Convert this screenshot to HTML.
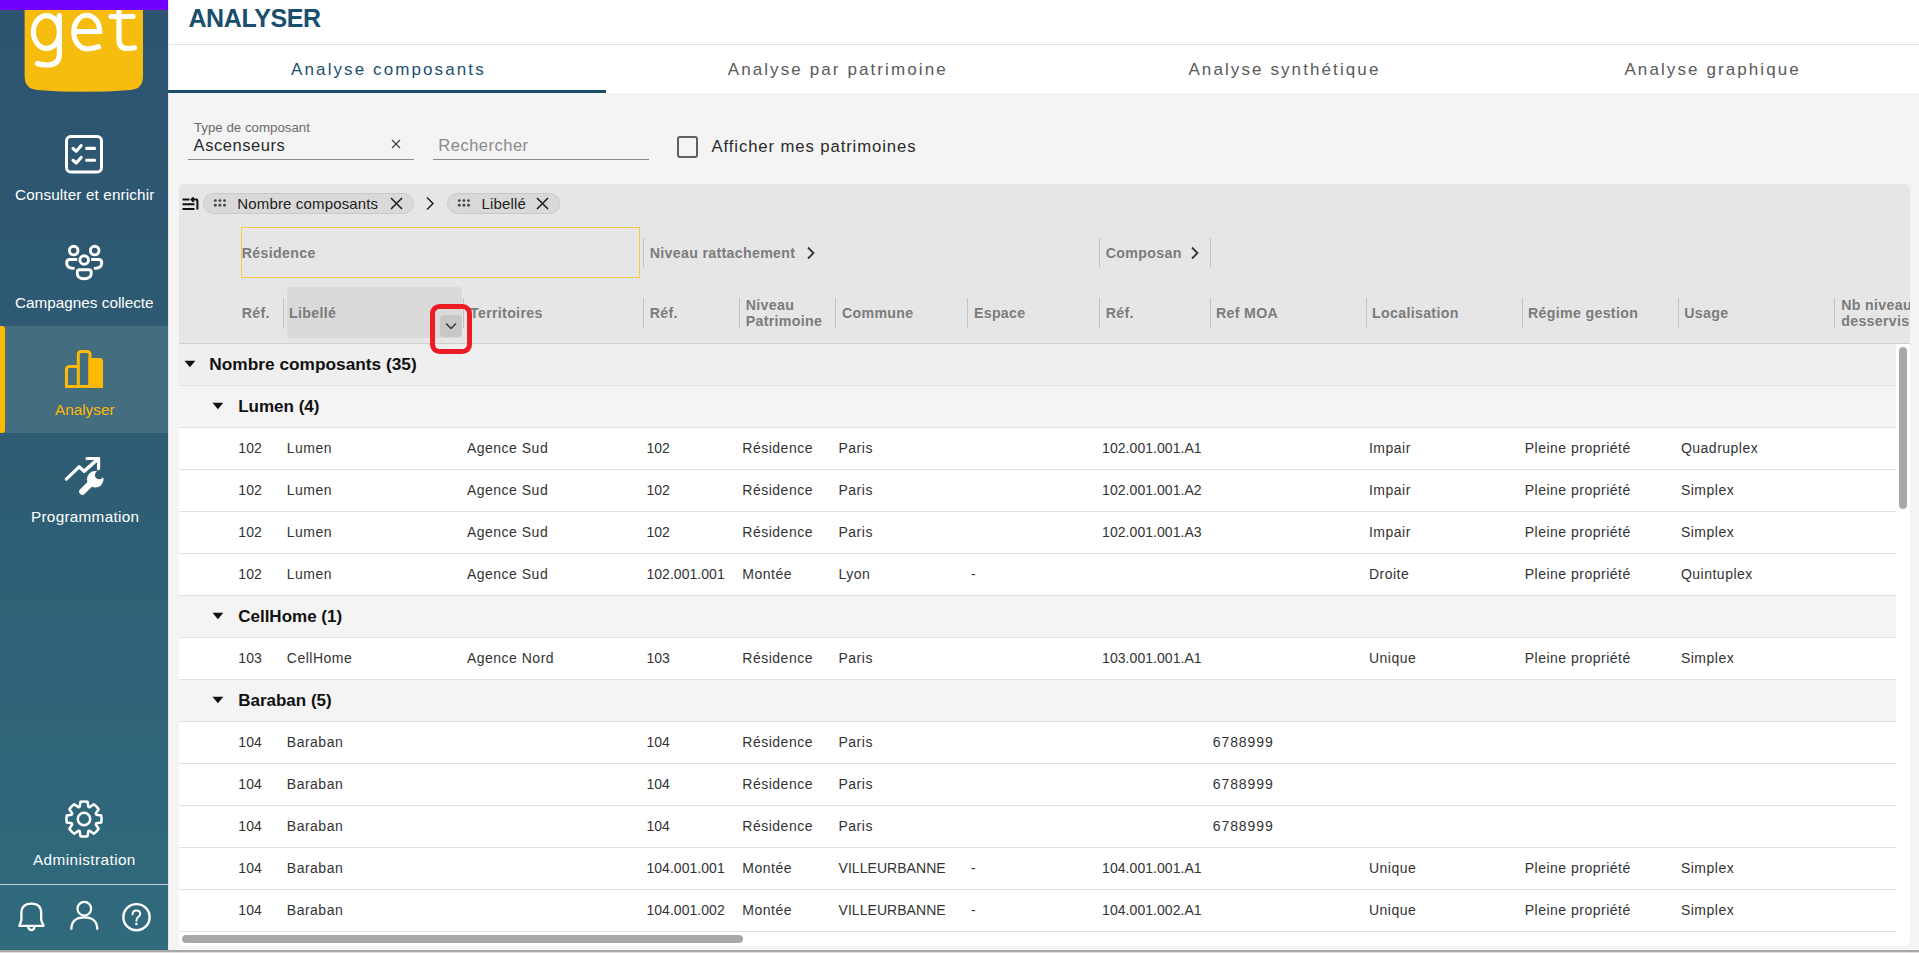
<!DOCTYPE html>
<html><head><meta charset="utf-8"><style>
html,body{margin:0;padding:0;}
body{width:1919px;height:953px;overflow:hidden;position:relative;background:#f4f4f4;font-family:"Liberation Sans", sans-serif;}
.r{position:absolute;box-sizing:border-box;}
svg.r{overflow:visible;}
.t{position:absolute;white-space:nowrap;}
</style></head><body>
<div class="r" style="left:168px;top:0px;width:1751px;height:44px;background:#fff"></div>
<div class="r" style="left:168px;top:44px;width:1751px;height:1px;background:#e3e3e3"></div>
<div class="r" style="left:168px;top:45px;width:1751px;height:48px;background:#fff"></div>
<div class="r" style="left:168px;top:93px;width:1751px;height:857px;background:#f4f4f4"></div>
<div class="r" style="left:168px;top:0px;width:1px;height:950px;background:#e6e6e6"></div>
<div class="r" style="left:0px;top:950px;width:1919px;height:2px;background:#aca7a7"></div>
<div class="r" style="left:0px;top:952px;width:1919px;height:1px;background:#e3dcdc"></div>
<div class="r" style="left:0px;top:0px;width:168px;height:950px;background:linear-gradient(to bottom,#2d5370 0%,#2e5d74 50%,#306a7d 100%)"></div>
<svg class="r" style="left:0;top:0" width="168" height="100" viewBox="0 0 168 100"><path d="M24.6 8V76Q24.6 89.3 37.5 89.9Q84 93.6 130.5 89.9Q143 89.3 143 76V8Z" fill="#f6bd0e"/></svg>
<svg class="r" style="left:0;top:0" width="168" height="100" viewBox="0 0 168 100" fill="none" stroke="#fff" stroke-width="5.2" stroke-linecap="round">
<ellipse cx="46.5" cy="32" rx="13" ry="16.4"/><path d="M59.4 15.6V54Q59.4 65 47 65Q41 65 37.5 63.5"/>
<path d="M73.8 31.5H99.8A13 16.6 0 0 0 73.8 32.2A13 16.6 0 0 0 86.8 48.8Q93 48.8 98.5 46.8"/>
<path d="M119 4V40Q119 48.5 127.5 48.5Q131 48.5 134.5 47.8"/><path d="M111 16.5H133"/></svg>
<div class="r" style="left:0px;top:0px;width:168px;height:10px;background:#7300ff"></div>
<div class="r" style="left:0px;top:326px;width:168px;height:107px;background:#446d80"></div>
<div class="r" style="left:0px;top:326px;width:5px;height:107px;background:#ffb900;border-radius:0 3px 3px 0"></div>
<div class="t" style="left:15.0px;top:186.75px;font-size:15.3px;line-height:15.3px;font-weight:400;color:#ffffff;letter-spacing:0.12px;">Consulter et enrichir</div>
<div class="t" style="left:15.0px;top:295.25px;font-size:15.3px;line-height:15.3px;font-weight:400;color:#ffffff;letter-spacing:0px;">Campagnes collecte</div>
<div class="t" style="left:55.0px;top:401.75px;font-size:15.3px;line-height:15.3px;font-weight:400;color:#ffb900;letter-spacing:0px;">Analyser</div>
<div class="t" style="left:31.0px;top:508.65px;font-size:15.3px;line-height:15.3px;font-weight:400;color:#ffffff;letter-spacing:0.28px;">Programmation</div>
<div class="t" style="left:33.0px;top:852.05px;font-size:15.3px;line-height:15.3px;font-weight:400;color:#ffffff;letter-spacing:0.42px;">Administration</div>
<div class="r" style="left:0px;top:884px;width:168px;height:1px;background:#c9d5da"></div>
<svg class="r" style="left:64px;top:134px" width="40" height="40" viewBox="0 0 40 40" fill="none" stroke="#fff" stroke-width="3" stroke-linecap="round" stroke-linejoin="round">
<rect x="2.5" y="2.6" width="35" height="35.4" rx="4.2"/>
<path d="M9 14.5l3.3 2.7 4.9-5.6M9 26.3l3.3 2.7 4.9-5.6" stroke-width="3.1"/><path d="M22.6 14.4h8M22.6 26.2h8" stroke-width="3.1"/></svg>
<svg class="r" style="left:64px;top:244px" width="40" height="40" viewBox="0 0 40 40" fill="none" stroke="#fff" stroke-width="2.9">
<circle cx="9.7" cy="6.6" r="4.3"/><circle cx="30.7" cy="6.6" r="4.3"/><circle cx="20.2" cy="16" r="4.3"/>
<path d="M13.2 15.5H5.9Q2.7 15.5 2.7 18.7V19.5Q2.7 24.4 10.6 24.4"/><path d="M27.2 15.5H34.5Q37.7 15.5 37.7 18.7V19.5Q37.7 24.4 29.8 24.4"/>
<path d="M15.6 25.7H24.9Q27.2 25.7 27.2 28V29.5Q27.2 34.7 20.2 34.7Q13.3 34.7 13.3 29.5V28Q13.3 25.7 15.6 25.7Z"/></svg>
<svg class="r" style="left:64px;top:349px" width="40" height="40" viewBox="0 0 40 40" fill="none" stroke="#ffb900" stroke-width="3">
<path d="M2.5 39V20.4Q2.5 17.4 5.5 17.4H14.3"/><path d="M14.3 37.5V5.5Q14.3 2.5 17.3 2.5H23Q26 2.5 26 5.5V37.5"/>
<path d="M24.5 9.1H36Q39 9.1 39 12.1V39H24.5Z" fill="#ffb900" stroke="none"/><path d="M1 37.5H39"/></svg>
<svg class="r" style="left:64px;top:456px" width="40" height="40" viewBox="0 0 40 40" fill="none" stroke="#fff" stroke-width="3.2" stroke-linecap="round" stroke-linejoin="round">
<path d="M2.3 23.1L15.1 10.8L20.1 15.2L34.4 2.6"/><path d="M23 2.5H34.6V12.9"/>
<circle cx="31.2" cy="23.3" r="8.3" fill="#fff" stroke="none"/><path d="M18.5 35.5L29 25" stroke-width="6.6"/>
<circle cx="35.2" cy="19" r="4.3" fill="#2e5d74" stroke="none"/><path d="M35.2 19L42 12.2" stroke="#2e5d74" stroke-width="7" stroke-linecap="butt"/>
<path d="M20.1 15.2L34.4 2.6" /></svg>
<svg class="r" style="left:60px;top:795px" width="48" height="48" viewBox="0 0 48 48" fill="none" stroke="#fff" stroke-width="2.5" stroke-linejoin="round">
<circle cx="24" cy="24" r="6.2"/><path d="M19.66 11.75L20.49 6.75A17.6 17.6 0 0 1 27.51 6.75L28.34 11.75A13.0 13.0 0 0 1 29.60 12.27L33.71 9.32A17.6 17.6 0 0 1 38.68 14.29L35.73 18.40A13.0 13.0 0 0 1 36.25 19.66L41.25 20.49A17.6 17.6 0 0 1 41.25 27.51L36.25 28.34A13.0 13.0 0 0 1 35.73 29.60L38.68 33.71A17.6 17.6 0 0 1 33.71 38.68L29.60 35.73A13.0 13.0 0 0 1 28.34 36.25L27.51 41.25A17.6 17.6 0 0 1 20.49 41.25L19.66 36.25A13.0 13.0 0 0 1 18.40 35.73L14.29 38.68A17.6 17.6 0 0 1 9.32 33.71L12.27 29.60A13.0 13.0 0 0 1 11.75 28.34L6.75 27.51A17.6 17.6 0 0 1 6.75 20.49L11.75 19.66A13.0 13.0 0 0 1 12.27 18.40L9.32 14.29A17.6 17.6 0 0 1 14.29 9.32L18.40 12.27Z"/></svg>
<svg class="r" style="left:17px;top:902px" width="30" height="30" viewBox="0 0 30 30" fill="none" stroke="#fff" stroke-width="2.3" stroke-linejoin="round">
<path d="M2.4 23.8H26.6L24.2 18.2V11.2Q24.2 1.6 14.4 1.6Q4.4 1.6 4.4 11.2V18.2Z"/><path d="M11.4 25A3 3 0 0 0 17.4 25"/></svg>
<svg class="r" style="left:69px;top:900px" width="30" height="31" viewBox="0 0 30 31" fill="none" stroke="#fff" stroke-width="2.2">
<circle cx="15.3" cy="8.7" r="6.8"/><path d="M2.3 29.7Q2.3 17.3 15.3 17.3Q28.3 17.3 28.3 29.7"/></svg>
<svg class="r" style="left:121px;top:902px" width="31" height="31" viewBox="0 0 31 31" fill="none" stroke="#fff" stroke-width="2.4">
<circle cx="15.5" cy="15.2" r="13.1"/><path d="M11.6 12.2Q11.6 8.4 15.4 8.4Q19.2 8.4 19.2 11.8Q19.2 13.6 17.2 15Q15.4 16.3 15.4 18.8" stroke-width="2" stroke-linecap="round"/><circle cx="15.4" cy="22" r="1.35" fill="#fff" stroke="none"/></svg>
<div class="t" style="left:188.4px;top:5.93px;font-size:25px;line-height:25px;font-weight:700;color:#1a4e6d;letter-spacing:-0.35px;">ANALYSER</div>
<div class="t" style="left:291.1px;top:60.71px;font-size:17px;line-height:17px;font-weight:400;color:#1d4f6e;letter-spacing:2.1px;">Analyse composants</div>
<div class="t" style="left:727.7px;top:60.71px;font-size:17px;line-height:17px;font-weight:400;color:#5a5a5a;letter-spacing:2.1px;">Analyse par patrimoine</div>
<div class="t" style="left:1188.4px;top:60.71px;font-size:17px;line-height:17px;font-weight:400;color:#5a5a5a;letter-spacing:2.1px;">Analyse synthétique</div>
<div class="t" style="left:1624.4px;top:60.71px;font-size:17px;line-height:17px;font-weight:400;color:#5a5a5a;letter-spacing:2.1px;">Analyse graphique</div>
<div class="r" style="left:168px;top:90px;width:438px;height:3px;background:#1b4c6a"></div>
<div class="t" style="left:193.9px;top:121.24px;font-size:13.3px;line-height:13.3px;font-weight:400;color:#6b6b6b;letter-spacing:0px;">Type de composant</div>
<div class="t" style="left:193.6px;top:136.63px;font-size:16.5px;line-height:16.5px;font-weight:400;color:#2a2a2a;letter-spacing:0.55px;">Ascenseurs</div>
<div class="r" style="left:188px;top:159px;width:226px;height:1px;background:#8a8a8a"></div>
<svg class="r" style="left:391px;top:139px" width="10" height="10" viewBox="0 0 10 10" stroke="#444" stroke-width="1.2"><path d="M1 1L9 9M9 1L1 9"/></svg>
<div class="t" style="left:438.3px;top:136.63px;font-size:16.5px;line-height:16.5px;font-weight:400;color:#8a8a8a;letter-spacing:0.5px;">Rechercher</div>
<div class="r" style="left:433px;top:159px;width:216px;height:1px;background:#8a8a8a"></div>
<div class="r" style="left:677px;top:136px;width:21px;height:22px;border:2px solid #606060;border-radius:3px;background:#f4f4f4"></div>
<div class="t" style="left:711.5px;top:138.76px;font-size:16.7px;line-height:16.7px;font-weight:400;color:#2a2a2a;letter-spacing:0.9px;">Afficher mes patrimoines</div>
<div class="r" style="left:179px;top:184px;width:1731px;height:762px;background:#fff;border-radius:5px;overflow:hidden"></div>
<div class="r" style="left:179px;top:184px;width:1731px;height:159px;background:#e6e6e6;border-radius:5px 5px 0 0"></div>
<div class="r" style="left:179px;top:343px;width:1731px;height:1px;background:#cfcfcf"></div>
<svg class="r" style="left:181px;top:196px" width="19" height="16" viewBox="0 0 19 16" fill="none" stroke="#111" stroke-width="2">
<path d="M1.5 3.5H8.5M1.5 8.3H13.5M1.5 13.1H13.5"/><path d="M16.4 13.6V4.6Q16.4 3.6 15.4 3.6H11.2"/><path d="M12.7 1.3L10.5 3.6L12.7 5.9" stroke-width="1.9"/></svg>
<div class="r" style="left:203px;top:193px;width:211px;height:21px;background:#d9d9d9;border:1px solid #c9c9c9;border-radius:11px"></div>
<svg class="r" style="left:213px;top:199px" width="14" height="9" viewBox="0 0 14 9" fill="#484848"><circle cx="2.3" cy="1.6" r="1.45"/><circle cx="2.3" cy="6.3" r="1.45"/><circle cx="6.9" cy="1.6" r="1.45"/><circle cx="6.9" cy="6.3" r="1.45"/><circle cx="11.5" cy="1.6" r="1.45"/><circle cx="11.5" cy="6.3" r="1.45"/></svg>
<div class="t" style="left:237.3px;top:195.70px;font-size:15px;line-height:15px;font-weight:400;color:#222;letter-spacing:0.15px;">Nombre composants</div>
<svg class="r" style="left:389.5px;top:197px" width="13" height="13" viewBox="0 0 13 13" stroke="#222" stroke-width="1.6"><path d="M1 1L12 12M12 1L1 12"/></svg>
<svg class="r" style="left:425px;top:196px" width="10" height="15" viewBox="0 0 10 15" fill="none" stroke="#222" stroke-width="1.5"><path d="M2 1.5L8 7.5L2 13.5"/></svg>
<div class="r" style="left:447px;top:193px;width:113px;height:21px;background:#d9d9d9;border:1px solid #c9c9c9;border-radius:11px"></div>
<svg class="r" style="left:457px;top:199px" width="14" height="9" viewBox="0 0 14 9" fill="#484848"><circle cx="2.3" cy="1.6" r="1.45"/><circle cx="2.3" cy="6.3" r="1.45"/><circle cx="6.9" cy="1.6" r="1.45"/><circle cx="6.9" cy="6.3" r="1.45"/><circle cx="11.5" cy="1.6" r="1.45"/><circle cx="11.5" cy="6.3" r="1.45"/></svg>
<div class="t" style="left:481.6px;top:195.70px;font-size:15px;line-height:15px;font-weight:400;color:#222;letter-spacing:0.15px;">Libellé</div>
<svg class="r" style="left:536px;top:197px" width="13" height="13" viewBox="0 0 13 13" stroke="#222" stroke-width="1.6"><path d="M1 1L12 12M12 1L1 12"/></svg>
<div class="r" style="left:241px;top:227px;width:399px;height:51px;border:1px solid #f5c94a;background:#e6e6e6"></div>
<div class="t" style="left:241.8px;top:246.38px;font-size:14.2px;line-height:14.2px;font-weight:700;color:#7c7c7c;letter-spacing:0.32px;">Résidence</div>
<div class="r" style="left:643px;top:238px;width:1px;height:30px;background:#c3c3c3"></div>
<div class="r" style="left:1099px;top:238px;width:1px;height:30px;background:#c3c3c3"></div>
<div class="r" style="left:1210px;top:238px;width:1px;height:30px;background:#c3c3c3"></div>
<div class="t" style="left:649.7px;top:246.38px;font-size:14.2px;line-height:14.2px;font-weight:700;color:#7c7c7c;letter-spacing:0.32px;">Niveau rattachement</div>
<svg class="r" style="left:806px;top:246px" width="10" height="14" viewBox="0 0 10 14" fill="none" stroke="#333" stroke-width="1.8"><path d="M2 1.5L7.5 7L2 12.5"/></svg>
<div class="t" style="left:1105.8px;top:246.38px;font-size:14.2px;line-height:14.2px;font-weight:700;color:#7c7c7c;letter-spacing:0.32px;">Composan</div>
<svg class="r" style="left:1190px;top:246px" width="10" height="14" viewBox="0 0 10 14" fill="none" stroke="#333" stroke-width="1.8"><path d="M2 1.5L7.5 7L2 12.5"/></svg>
<div class="r" style="left:287px;top:287px;width:175px;height:51px;background:#dadada;border-radius:4px"></div>
<div class="r" style="left:440px;top:315px;width:22px;height:22px;background:#c8c8c8;border-radius:4px"></div>
<svg class="r" style="left:445px;top:322px" width="12" height="8" viewBox="0 0 12 8" fill="none" stroke="#333" stroke-width="1.4"><path d="M1 1.5L6 6.5L11 1.5"/></svg>
<div class="r" style="left:283px;top:298px;width:1px;height:30px;background:#c3c3c3"></div>
<div class="r" style="left:463px;top:298px;width:1px;height:30px;background:#c3c3c3"></div>
<div class="r" style="left:643px;top:298px;width:1px;height:30px;background:#c3c3c3"></div>
<div class="r" style="left:739px;top:298px;width:1px;height:30px;background:#c3c3c3"></div>
<div class="r" style="left:835px;top:298px;width:1px;height:30px;background:#c3c3c3"></div>
<div class="r" style="left:967px;top:298px;width:1px;height:30px;background:#c3c3c3"></div>
<div class="r" style="left:1099px;top:298px;width:1px;height:30px;background:#c3c3c3"></div>
<div class="r" style="left:1210px;top:298px;width:1px;height:30px;background:#c3c3c3"></div>
<div class="r" style="left:1366px;top:298px;width:1px;height:30px;background:#c3c3c3"></div>
<div class="r" style="left:1522px;top:298px;width:1px;height:30px;background:#c3c3c3"></div>
<div class="r" style="left:1678px;top:298px;width:1px;height:30px;background:#c3c3c3"></div>
<div class="r" style="left:1834px;top:298px;width:1px;height:30px;background:#c3c3c3"></div>
<div class="t" style="left:241.8px;top:306.38px;font-size:14.2px;line-height:14.2px;font-weight:700;color:#7c7c7c;letter-spacing:0.32px;">Réf.</div>
<div class="t" style="left:289.0px;top:306.38px;font-size:14.2px;line-height:14.2px;font-weight:700;color:#7c7c7c;letter-spacing:0.32px;">Libellé</div>
<div class="t" style="left:470.0px;top:306.38px;font-size:14.2px;line-height:14.2px;font-weight:700;color:#7c7c7c;letter-spacing:0.32px;">Territoires</div>
<div class="t" style="left:649.7px;top:306.38px;font-size:14.2px;line-height:14.2px;font-weight:700;color:#7c7c7c;letter-spacing:0.32px;">Réf.</div>
<div class="t" style="left:745.7px;top:298.18px;font-size:14.2px;line-height:14.2px;font-weight:700;color:#7c7c7c;letter-spacing:0.32px;">Niveau</div>
<div class="t" style="left:745.7px;top:314.18px;font-size:14.2px;line-height:14.2px;font-weight:700;color:#7c7c7c;letter-spacing:0.32px;">Patrimoine</div>
<div class="t" style="left:841.9px;top:306.38px;font-size:14.2px;line-height:14.2px;font-weight:700;color:#7c7c7c;letter-spacing:0.32px;">Commune</div>
<div class="t" style="left:973.9px;top:306.38px;font-size:14.2px;line-height:14.2px;font-weight:700;color:#7c7c7c;letter-spacing:0.32px;">Espace</div>
<div class="t" style="left:1105.8px;top:306.38px;font-size:14.2px;line-height:14.2px;font-weight:700;color:#7c7c7c;letter-spacing:0.32px;">Réf.</div>
<div class="t" style="left:1216.0px;top:306.38px;font-size:14.2px;line-height:14.2px;font-weight:700;color:#7c7c7c;letter-spacing:0.32px;">Ref MOA</div>
<div class="t" style="left:1372.0px;top:306.38px;font-size:14.2px;line-height:14.2px;font-weight:700;color:#7c7c7c;letter-spacing:0.32px;">Localisation</div>
<div class="t" style="left:1528.0px;top:306.38px;font-size:14.2px;line-height:14.2px;font-weight:700;color:#7c7c7c;letter-spacing:0.32px;">Régime gestion</div>
<div class="t" style="left:1684.2px;top:306.38px;font-size:14.2px;line-height:14.2px;font-weight:700;color:#7c7c7c;letter-spacing:0.32px;">Usage</div>
<div class="r" style="left:1834px;top:297px;width:76px;height:34px;overflow:hidden"><div class="t" style="left:7.2px;top:0px;font-size:14.2px;line-height:16px;font-weight:700;color:#7c7c7c;letter-spacing:0.32px">Nb niveau<br>desservis</div></div>
<div class="r" style="left:179px;top:344px;width:1717px;height:41px;background:#efefef"></div>
<svg class="r" style="left:184px;top:360px" width="12" height="8" viewBox="0 0 12 8" fill="#111"><path d="M0.5 0.8H11.3L5.9 7.2Z"/></svg>
<div class="t" style="left:209.3px;top:355.95px;font-size:17.3px;line-height:17.3px;font-weight:700;color:#111;letter-spacing:0px;">Nombre composants (35)</div>
<div class="r" style="left:179px;top:385px;width:1717px;height:1px;background:#e2e2e2"></div>
<div class="r" style="left:179px;top:386px;width:1717px;height:41px;background:#f4f4f4"></div>
<svg class="r" style="left:212px;top:402px" width="12" height="8" viewBox="0 0 12 8" fill="#111"><path d="M0.5 0.8H11.3L5.9 7.2Z"/></svg>
<div class="t" style="left:238.2px;top:397.81px;font-size:17px;line-height:17px;font-weight:700;color:#111;letter-spacing:0px;">Lumen (4)</div>
<div class="r" style="left:179px;top:427px;width:1717px;height:1px;background:#e2e2e2"></div>
<div class="t" style="left:238.3px;top:441.25px;font-size:14px;line-height:14px;font-weight:400;color:#333;letter-spacing:0.05px;">102</div>
<div class="t" style="left:286.8px;top:441.25px;font-size:14px;line-height:14px;font-weight:400;color:#333;letter-spacing:0.5px;">Lumen</div>
<div class="t" style="left:466.9px;top:441.25px;font-size:14px;line-height:14px;font-weight:400;color:#333;letter-spacing:0.5px;">Agence Sud</div>
<div class="t" style="left:646.4px;top:441.25px;font-size:14px;line-height:14px;font-weight:400;color:#333;letter-spacing:0.05px;">102</div>
<div class="t" style="left:742.3px;top:441.25px;font-size:14px;line-height:14px;font-weight:400;color:#333;letter-spacing:0.5px;">Résidence</div>
<div class="t" style="left:838.5px;top:441.25px;font-size:14px;line-height:14px;font-weight:400;color:#333;letter-spacing:0.5px;">Paris</div>
<div class="t" style="left:1102.1px;top:441.25px;font-size:14px;line-height:14px;font-weight:400;color:#333;letter-spacing:0.05px;">102.001.001.A1</div>
<div class="t" style="left:1368.9px;top:441.25px;font-size:14px;line-height:14px;font-weight:400;color:#333;letter-spacing:0.5px;">Impair</div>
<div class="t" style="left:1524.7px;top:441.25px;font-size:14px;line-height:14px;font-weight:400;color:#333;letter-spacing:0.5px;">Pleine propriété</div>
<div class="t" style="left:1680.9px;top:441.25px;font-size:14px;line-height:14px;font-weight:400;color:#333;letter-spacing:0.5px;">Quadruplex</div>
<div class="r" style="left:179px;top:469px;width:1717px;height:1px;background:#e2e2e2"></div>
<div class="t" style="left:238.3px;top:483.25px;font-size:14px;line-height:14px;font-weight:400;color:#333;letter-spacing:0.05px;">102</div>
<div class="t" style="left:286.8px;top:483.25px;font-size:14px;line-height:14px;font-weight:400;color:#333;letter-spacing:0.5px;">Lumen</div>
<div class="t" style="left:466.9px;top:483.25px;font-size:14px;line-height:14px;font-weight:400;color:#333;letter-spacing:0.5px;">Agence Sud</div>
<div class="t" style="left:646.4px;top:483.25px;font-size:14px;line-height:14px;font-weight:400;color:#333;letter-spacing:0.05px;">102</div>
<div class="t" style="left:742.3px;top:483.25px;font-size:14px;line-height:14px;font-weight:400;color:#333;letter-spacing:0.5px;">Résidence</div>
<div class="t" style="left:838.5px;top:483.25px;font-size:14px;line-height:14px;font-weight:400;color:#333;letter-spacing:0.5px;">Paris</div>
<div class="t" style="left:1102.1px;top:483.25px;font-size:14px;line-height:14px;font-weight:400;color:#333;letter-spacing:0.05px;">102.001.001.A2</div>
<div class="t" style="left:1368.9px;top:483.25px;font-size:14px;line-height:14px;font-weight:400;color:#333;letter-spacing:0.5px;">Impair</div>
<div class="t" style="left:1524.7px;top:483.25px;font-size:14px;line-height:14px;font-weight:400;color:#333;letter-spacing:0.5px;">Pleine propriété</div>
<div class="t" style="left:1680.9px;top:483.25px;font-size:14px;line-height:14px;font-weight:400;color:#333;letter-spacing:0.5px;">Simplex</div>
<div class="r" style="left:179px;top:511px;width:1717px;height:1px;background:#e2e2e2"></div>
<div class="t" style="left:238.3px;top:525.25px;font-size:14px;line-height:14px;font-weight:400;color:#333;letter-spacing:0.05px;">102</div>
<div class="t" style="left:286.8px;top:525.25px;font-size:14px;line-height:14px;font-weight:400;color:#333;letter-spacing:0.5px;">Lumen</div>
<div class="t" style="left:466.9px;top:525.25px;font-size:14px;line-height:14px;font-weight:400;color:#333;letter-spacing:0.5px;">Agence Sud</div>
<div class="t" style="left:646.4px;top:525.25px;font-size:14px;line-height:14px;font-weight:400;color:#333;letter-spacing:0.05px;">102</div>
<div class="t" style="left:742.3px;top:525.25px;font-size:14px;line-height:14px;font-weight:400;color:#333;letter-spacing:0.5px;">Résidence</div>
<div class="t" style="left:838.5px;top:525.25px;font-size:14px;line-height:14px;font-weight:400;color:#333;letter-spacing:0.5px;">Paris</div>
<div class="t" style="left:1102.1px;top:525.25px;font-size:14px;line-height:14px;font-weight:400;color:#333;letter-spacing:0.05px;">102.001.001.A3</div>
<div class="t" style="left:1368.9px;top:525.25px;font-size:14px;line-height:14px;font-weight:400;color:#333;letter-spacing:0.5px;">Impair</div>
<div class="t" style="left:1524.7px;top:525.25px;font-size:14px;line-height:14px;font-weight:400;color:#333;letter-spacing:0.5px;">Pleine propriété</div>
<div class="t" style="left:1680.9px;top:525.25px;font-size:14px;line-height:14px;font-weight:400;color:#333;letter-spacing:0.5px;">Simplex</div>
<div class="r" style="left:179px;top:553px;width:1717px;height:1px;background:#e2e2e2"></div>
<div class="t" style="left:238.3px;top:567.25px;font-size:14px;line-height:14px;font-weight:400;color:#333;letter-spacing:0.05px;">102</div>
<div class="t" style="left:286.8px;top:567.25px;font-size:14px;line-height:14px;font-weight:400;color:#333;letter-spacing:0.5px;">Lumen</div>
<div class="t" style="left:466.9px;top:567.25px;font-size:14px;line-height:14px;font-weight:400;color:#333;letter-spacing:0.5px;">Agence Sud</div>
<div class="t" style="left:646.4px;top:567.25px;font-size:14px;line-height:14px;font-weight:400;color:#333;letter-spacing:0.05px;">102.001.001</div>
<div class="t" style="left:742.3px;top:567.25px;font-size:14px;line-height:14px;font-weight:400;color:#333;letter-spacing:0.5px;">Montée</div>
<div class="t" style="left:838.5px;top:567.25px;font-size:14px;line-height:14px;font-weight:400;color:#333;letter-spacing:0.5px;">Lyon</div>
<div class="t" style="left:971.0px;top:567.25px;font-size:14px;line-height:14px;font-weight:400;color:#333;letter-spacing:0.05px;">-</div>
<div class="t" style="left:1368.9px;top:567.25px;font-size:14px;line-height:14px;font-weight:400;color:#333;letter-spacing:0.5px;">Droite</div>
<div class="t" style="left:1524.7px;top:567.25px;font-size:14px;line-height:14px;font-weight:400;color:#333;letter-spacing:0.5px;">Pleine propriété</div>
<div class="t" style="left:1680.9px;top:567.25px;font-size:14px;line-height:14px;font-weight:400;color:#333;letter-spacing:0.5px;">Quintuplex</div>
<div class="r" style="left:179px;top:595px;width:1717px;height:1px;background:#e2e2e2"></div>
<div class="r" style="left:179px;top:596px;width:1717px;height:41px;background:#f4f4f4"></div>
<svg class="r" style="left:212px;top:612px" width="12" height="8" viewBox="0 0 12 8" fill="#111"><path d="M0.5 0.8H11.3L5.9 7.2Z"/></svg>
<div class="t" style="left:238.2px;top:607.81px;font-size:17px;line-height:17px;font-weight:700;color:#111;letter-spacing:0px;">CellHome (1)</div>
<div class="r" style="left:179px;top:637px;width:1717px;height:1px;background:#e2e2e2"></div>
<div class="t" style="left:238.3px;top:651.25px;font-size:14px;line-height:14px;font-weight:400;color:#333;letter-spacing:0.05px;">103</div>
<div class="t" style="left:286.8px;top:651.25px;font-size:14px;line-height:14px;font-weight:400;color:#333;letter-spacing:0.5px;">CellHome</div>
<div class="t" style="left:466.9px;top:651.25px;font-size:14px;line-height:14px;font-weight:400;color:#333;letter-spacing:0.5px;">Agence Nord</div>
<div class="t" style="left:646.4px;top:651.25px;font-size:14px;line-height:14px;font-weight:400;color:#333;letter-spacing:0.05px;">103</div>
<div class="t" style="left:742.3px;top:651.25px;font-size:14px;line-height:14px;font-weight:400;color:#333;letter-spacing:0.5px;">Résidence</div>
<div class="t" style="left:838.5px;top:651.25px;font-size:14px;line-height:14px;font-weight:400;color:#333;letter-spacing:0.5px;">Paris</div>
<div class="t" style="left:1102.1px;top:651.25px;font-size:14px;line-height:14px;font-weight:400;color:#333;letter-spacing:0.05px;">103.001.001.A1</div>
<div class="t" style="left:1368.9px;top:651.25px;font-size:14px;line-height:14px;font-weight:400;color:#333;letter-spacing:0.5px;">Unique</div>
<div class="t" style="left:1524.7px;top:651.25px;font-size:14px;line-height:14px;font-weight:400;color:#333;letter-spacing:0.5px;">Pleine propriété</div>
<div class="t" style="left:1680.9px;top:651.25px;font-size:14px;line-height:14px;font-weight:400;color:#333;letter-spacing:0.5px;">Simplex</div>
<div class="r" style="left:179px;top:679px;width:1717px;height:1px;background:#e2e2e2"></div>
<div class="r" style="left:179px;top:680px;width:1717px;height:41px;background:#f4f4f4"></div>
<svg class="r" style="left:212px;top:696px" width="12" height="8" viewBox="0 0 12 8" fill="#111"><path d="M0.5 0.8H11.3L5.9 7.2Z"/></svg>
<div class="t" style="left:238.2px;top:691.81px;font-size:17px;line-height:17px;font-weight:700;color:#111;letter-spacing:0px;">Baraban (5)</div>
<div class="r" style="left:179px;top:721px;width:1717px;height:1px;background:#e2e2e2"></div>
<div class="t" style="left:238.3px;top:735.25px;font-size:14px;line-height:14px;font-weight:400;color:#333;letter-spacing:0.05px;">104</div>
<div class="t" style="left:286.8px;top:735.25px;font-size:14px;line-height:14px;font-weight:400;color:#333;letter-spacing:0.5px;">Baraban</div>
<div class="t" style="left:646.4px;top:735.25px;font-size:14px;line-height:14px;font-weight:400;color:#333;letter-spacing:0.05px;">104</div>
<div class="t" style="left:742.3px;top:735.25px;font-size:14px;line-height:14px;font-weight:400;color:#333;letter-spacing:0.5px;">Résidence</div>
<div class="t" style="left:838.5px;top:735.25px;font-size:14px;line-height:14px;font-weight:400;color:#333;letter-spacing:0.5px;">Paris</div>
<div class="t" style="left:1212.8px;top:735.25px;font-size:14px;line-height:14px;font-weight:400;color:#333;letter-spacing:0.9px;">6788999</div>
<div class="r" style="left:179px;top:763px;width:1717px;height:1px;background:#e2e2e2"></div>
<div class="t" style="left:238.3px;top:777.25px;font-size:14px;line-height:14px;font-weight:400;color:#333;letter-spacing:0.05px;">104</div>
<div class="t" style="left:286.8px;top:777.25px;font-size:14px;line-height:14px;font-weight:400;color:#333;letter-spacing:0.5px;">Baraban</div>
<div class="t" style="left:646.4px;top:777.25px;font-size:14px;line-height:14px;font-weight:400;color:#333;letter-spacing:0.05px;">104</div>
<div class="t" style="left:742.3px;top:777.25px;font-size:14px;line-height:14px;font-weight:400;color:#333;letter-spacing:0.5px;">Résidence</div>
<div class="t" style="left:838.5px;top:777.25px;font-size:14px;line-height:14px;font-weight:400;color:#333;letter-spacing:0.5px;">Paris</div>
<div class="t" style="left:1212.8px;top:777.25px;font-size:14px;line-height:14px;font-weight:400;color:#333;letter-spacing:0.9px;">6788999</div>
<div class="r" style="left:179px;top:805px;width:1717px;height:1px;background:#e2e2e2"></div>
<div class="t" style="left:238.3px;top:819.25px;font-size:14px;line-height:14px;font-weight:400;color:#333;letter-spacing:0.05px;">104</div>
<div class="t" style="left:286.8px;top:819.25px;font-size:14px;line-height:14px;font-weight:400;color:#333;letter-spacing:0.5px;">Baraban</div>
<div class="t" style="left:646.4px;top:819.25px;font-size:14px;line-height:14px;font-weight:400;color:#333;letter-spacing:0.05px;">104</div>
<div class="t" style="left:742.3px;top:819.25px;font-size:14px;line-height:14px;font-weight:400;color:#333;letter-spacing:0.5px;">Résidence</div>
<div class="t" style="left:838.5px;top:819.25px;font-size:14px;line-height:14px;font-weight:400;color:#333;letter-spacing:0.5px;">Paris</div>
<div class="t" style="left:1212.8px;top:819.25px;font-size:14px;line-height:14px;font-weight:400;color:#333;letter-spacing:0.9px;">6788999</div>
<div class="r" style="left:179px;top:847px;width:1717px;height:1px;background:#e2e2e2"></div>
<div class="t" style="left:238.3px;top:861.25px;font-size:14px;line-height:14px;font-weight:400;color:#333;letter-spacing:0.05px;">104</div>
<div class="t" style="left:286.8px;top:861.25px;font-size:14px;line-height:14px;font-weight:400;color:#333;letter-spacing:0.5px;">Baraban</div>
<div class="t" style="left:646.4px;top:861.25px;font-size:14px;line-height:14px;font-weight:400;color:#333;letter-spacing:0.05px;">104.001.001</div>
<div class="t" style="left:742.3px;top:861.25px;font-size:14px;line-height:14px;font-weight:400;color:#333;letter-spacing:0.5px;">Montée</div>
<div class="t" style="left:838.5px;top:861.25px;font-size:14px;line-height:14px;font-weight:400;color:#333;letter-spacing:0.05px;">VILLEURBANNE</div>
<div class="t" style="left:971.0px;top:861.25px;font-size:14px;line-height:14px;font-weight:400;color:#333;letter-spacing:0.05px;">-</div>
<div class="t" style="left:1102.1px;top:861.25px;font-size:14px;line-height:14px;font-weight:400;color:#333;letter-spacing:0.05px;">104.001.001.A1</div>
<div class="t" style="left:1368.9px;top:861.25px;font-size:14px;line-height:14px;font-weight:400;color:#333;letter-spacing:0.5px;">Unique</div>
<div class="t" style="left:1524.7px;top:861.25px;font-size:14px;line-height:14px;font-weight:400;color:#333;letter-spacing:0.5px;">Pleine propriété</div>
<div class="t" style="left:1680.9px;top:861.25px;font-size:14px;line-height:14px;font-weight:400;color:#333;letter-spacing:0.5px;">Simplex</div>
<div class="r" style="left:179px;top:889px;width:1717px;height:1px;background:#e2e2e2"></div>
<div class="t" style="left:238.3px;top:903.25px;font-size:14px;line-height:14px;font-weight:400;color:#333;letter-spacing:0.05px;">104</div>
<div class="t" style="left:286.8px;top:903.25px;font-size:14px;line-height:14px;font-weight:400;color:#333;letter-spacing:0.5px;">Baraban</div>
<div class="t" style="left:646.4px;top:903.25px;font-size:14px;line-height:14px;font-weight:400;color:#333;letter-spacing:0.05px;">104.001.002</div>
<div class="t" style="left:742.3px;top:903.25px;font-size:14px;line-height:14px;font-weight:400;color:#333;letter-spacing:0.5px;">Montée</div>
<div class="t" style="left:838.5px;top:903.25px;font-size:14px;line-height:14px;font-weight:400;color:#333;letter-spacing:0.05px;">VILLEURBANNE</div>
<div class="t" style="left:971.0px;top:903.25px;font-size:14px;line-height:14px;font-weight:400;color:#333;letter-spacing:0.05px;">-</div>
<div class="t" style="left:1102.1px;top:903.25px;font-size:14px;line-height:14px;font-weight:400;color:#333;letter-spacing:0.05px;">104.001.002.A1</div>
<div class="t" style="left:1368.9px;top:903.25px;font-size:14px;line-height:14px;font-weight:400;color:#333;letter-spacing:0.5px;">Unique</div>
<div class="t" style="left:1524.7px;top:903.25px;font-size:14px;line-height:14px;font-weight:400;color:#333;letter-spacing:0.5px;">Pleine propriété</div>
<div class="t" style="left:1680.9px;top:903.25px;font-size:14px;line-height:14px;font-weight:400;color:#333;letter-spacing:0.5px;">Simplex</div>
<div class="r" style="left:179px;top:931px;width:1717px;height:1px;background:#e2e2e2"></div>
<div class="r" style="left:1896px;top:344px;width:14px;height:588px;background:#fff"></div>
<div class="r" style="left:1899px;top:347px;width:8px;height:162px;background:#a8a8a8;border-radius:4px"></div>
<div class="r" style="left:182px;top:935px;width:561px;height:8px;background:#a8a8a8;border-radius:4px"></div>
<div class="r" style="left:430px;top:304px;width:42px;height:50px;border:5px solid #ec1c24;border-radius:9.5px;box-sizing:border-box"></div>
</body></html>
